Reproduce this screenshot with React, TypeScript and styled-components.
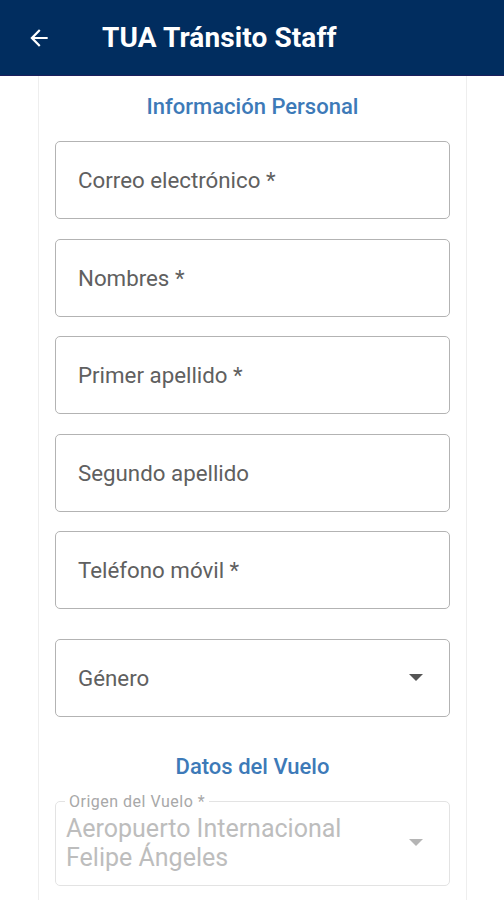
import styled, { createGlobalStyle } from 'styled-components';

const GlobalStyle = createGlobalStyle`
  * { box-sizing: border-box; }
  body {
    margin: 0;
    background: #ffffff;
    font-family: Roboto, "Noto Sans", sans-serif;
  }
`;

const Page = styled.div`
  width: 504px;
  height: 900px;
  overflow: hidden;
  display: flex;
  flex-direction: column;
  background: #ffffff;
`;

const Header = styled.header`
  height: 76px;
  flex-shrink: 0;
  background-color: #012d5f;
  border-bottom: 1px solid #1c1f5c;
  display: flex;
  align-items: center;
  padding: 0 0 0 26px;
  gap: 50px;
  color: #ffffff;
`;

const Title = styled.h1`
  margin: 0;
  font-size: 28px;
  font-weight: 700;
  letter-spacing: 0.1px;
`;

const Body = styled.main`
  flex: 1;
  display: flex;
  justify-content: center;
  padding: 0 37px 0 38px;
`;

const Card = styled.section`
  width: 100%;
  border-left: 1px solid #eeeeee;
  border-right: 1px solid #eeeeee;
  padding: 17px 16px 0 16px;
  display: flex;
  flex-direction: column;
`;

const SectionTitle = styled.h2<{ $top?: number }>`
  margin: ${(p) => p.$top ?? 0}px 0 20px;
  text-align: center;
  font-size: 22px;
  font-weight: 500;
  color: #3d7ab8;
  line-height: 28px;
`;

const Field = styled.div<{ $mt?: number }>`
  height: 78px;
  margin-top: ${(p) => p.$mt ?? 0}px;
  border: 1.5px solid #b3b3b3;
  border-radius: 5px;
  display: flex;
  align-items: center;
  justify-content: space-between;
  padding: 0 26px 0 22px;
  font-size: 22.3px;
  font-weight: 400;
  color: #606060;
`;

const Outlined = styled.fieldset`
  margin: -9px 0 0;
  min-width: 0;
  height: 94px;
  border: 1.5px solid #e3e3e3;
  border-radius: 5px;
  padding: 0 26px 0 10px;
`;

const Legend = styled.legend`
  padding: 0 4px;
  margin-left: -1px;
  font-size: 16px;
  line-height: 19px;
  color: #a8a8a8;
  letter-spacing: 0.5px;
`;

const OutlinedRow = styled.div`
  height: 74px;
  margin-top: -5px;
  display: flex;
  align-items: center;
  justify-content: space-between;
`;

const DisabledValue = styled.div`
  font-size: 25px;
  line-height: 29px;
  color: #bdbdbd;
`;

const Caret = ({ color }: { color: string }) => (
  <svg width="14" height="8" viewBox="0 0 14 8">
    <path d="M0 0 H14 L7 7 Z" fill={color} />
  </svg>
);

const BackArrow = () => (
  <svg width="26" height="26" viewBox="0 0 24 24">
    <path d="M20 11H7.83l5.59-5.59L12 4l-8 8 8 8 1.41-1.41L7.83 13H20v-2z" fill="#ffffff" />
  </svg>
);

const personalFields = ['Correo electrónico *', 'Nombres *', 'Primer apellido *', 'Segundo apellido', 'Teléfono móvil *'];

export default function App() {
  return (
    <>
      <GlobalStyle />
      <Page>
        <Header>
          <BackArrow />
          <Title>TUA Tránsito Staff</Title>
        </Header>
        <Body>
          <Card>
            <SectionTitle>Información Personal</SectionTitle>
            {personalFields.map((label, i) => (
              <Field key={label} $mt={i === 0 ? 0 : 19.5}>
                {label}
              </Field>
            ))}
            <Field $mt={30}>
              Género
              <Caret color="#555555" />
            </Field>
            <SectionTitle $top={36}>Datos del Vuelo</SectionTitle>
            <Outlined>
              <Legend>Origen del Vuelo *</Legend>
              <OutlinedRow>
                <DisabledValue>
                  Aeropuerto Internacional
                  <br />
                  Felipe Ángeles
                </DisabledValue>
                <Caret color="#b5b5b5" />
              </OutlinedRow>
            </Outlined>
          </Card>
        </Body>
      </Page>
    </>
  );
}
